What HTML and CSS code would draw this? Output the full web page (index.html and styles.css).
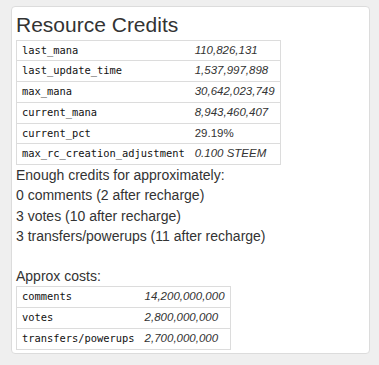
FILE: index.html
```html
<!DOCTYPE html>
<html>
<head>
<meta charset="utf-8">
<link rel="stylesheet" href="styles.css">
</head>
<body>
<div class="card">
  <h3 class="title">Resource Credits</h3>
  <table class="kv">
    <tr><td class="k">last_mana</td><td class="v">110,826,131</td></tr>
    <tr><td class="k">last_update_time</td><td class="v">1,537,997,898</td></tr>
    <tr><td class="k">max_mana</td><td class="v">30,642,023,749</td></tr>
    <tr><td class="k">current_mana</td><td class="v">8,943,460,407</td></tr>
    <tr><td class="k">current_pct</td><td class="v plain">29.19%</td></tr>
    <tr><td class="k">max_rc_creation_adjustment</td><td class="v">0.100 STEEM</td></tr>
  </table>
  <div class="lines">
    <div>Enough credits for approximately:</div>
    <div>0 comments (2 after recharge)</div>
    <div>3 votes (10 after recharge)</div>
    <div>3 transfers/powerups (11 after recharge)</div>
    <div class="blank"></div>
    <div>Approx costs:</div>
  </div>
  <table class="kv">
    <tr><td class="k">comments</td><td class="v">14,200,000,000</td></tr>
    <tr><td class="k">votes</td><td class="v">2,800,000,000</td></tr>
    <tr><td class="k">transfers/powerups</td><td class="v">2,700,000,000</td></tr>
  </table>
</div>
</body>
</html>
```
FILE: styles.css
```css
html, body {
  margin: 0;
  padding: 0;
}
body {
  background: #efefef;
  font-family: "Liberation Sans", Arial, sans-serif;
  font-size: 14px;
  color: #333;
}
.card {
  margin: 6px 9px 0 11px;
  width: 349px;
  height: 340px;
  background: #fff;
  border: 1px solid #dcdcdc;
  border-radius: 4px;
  padding: 6px 4px 0 4px;
}
.title {
  margin: 0 0 3.5px 0;
  font-size: 21px;
  font-weight: normal;
  line-height: 23px;
  color: #333;
}
.kv {
  border-collapse: collapse;
  border: 1px solid #dcdcdc;
}
.kv td {
  border-top: 1px solid #dcdcdc;
  padding: 3px 5px 3px 5px;
  line-height: 13.8px;
  vertical-align: middle;
}
.k {
  font-family: "DejaVu Sans Mono", monospace;
  font-size: 10.4px;
  color: #111;
}
.v {
  font-family: "Liberation Sans", Arial, sans-serif;
  font-style: italic;
  font-size: 11.5px;
  color: #333;
}
.v.plain {
  font-style: normal;
}
.lines {
  line-height: 20.2px;
}
.blank {
  height: 20.2px;
}
```
